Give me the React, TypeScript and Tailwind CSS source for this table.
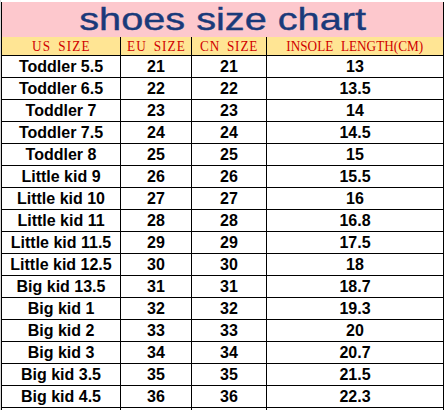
import React from "react";

const rows: [string, string, string, string][] = [
  ["Toddler 5.5", "21", "21", "13"],
  ["Toddler 6.5", "22", "22", "13.5"],
  ["Toddler 7", "23", "23", "14"],
  ["Toddler 7.5", "24", "24", "14.5"],
  ["Toddler 8", "25", "25", "15"],
  ["Little kid 9", "26", "26", "15.5"],
  ["Little kid 10", "27", "27", "16"],
  ["Little kid 11", "28", "28", "16.8"],
  ["Little kid 11.5", "29", "29", "17.5"],
  ["Little kid 12.5", "30", "30", "18"],
  ["Big kid 13.5", "31", "31", "18.7"],
  ["Big kid 1", "32", "32", "19.3"],
  ["Big kid 2", "33", "33", "20"],
  ["Big kid 3", "34", "34", "20.7"],
  ["Big kid 3.5", "35", "35", "21.5"],
  ["Big kid 4.5", "36", "36", "22.3"],
  ["", "", "", ""],
];

const headers = ["US SIZE", "EU SIZE", "CN SIZE", "INSOLE LENGTH(CM)"];
const widths = ["w-[119px]", "w-[71px]", "w-[75px]", "w-[177px]"];
const tracks = [
  "tracking-[1.3px] [word-spacing:3px]",
  "tracking-[1.2px] [word-spacing:3px]",
  "tracking-[1px] [word-spacing:3px]",
  "tracking-[0px] [word-spacing:5px]",
];

export default function App() {
  return (
    <div className="w-[446px] h-[410px] overflow-hidden bg-white border-l border-[#d9d9d9]">
      <div className="mt-[2px] w-[443px]">
        <div className="h-[35px] bg-[#fdc8cd] border-l border-r border-black flex items-center justify-center overflow-hidden">
          <span
            className="inline-block text-[32px] leading-none text-[#1a3a7a] [transform:scaleX(1.24)] pb-[1px] [-webkit-text-stroke:0.4px_#1a3a7a]"
            style={{ fontFamily: '"Liberation Sans", Arial, sans-serif' }}
          >
            shoes size chart
          </span>
        </div>
        <div className="flex h-[19px] bg-[#ffe594] border-l border-b border-black">
          {headers.map((h, i) => (
            <div
              key={i}
              className={`${widths[i]} border-r border-black flex items-center justify-center overflow-hidden`}
            >
              <span
                className={`${tracks[i]} inline-block text-[15px] leading-none text-[#d00000] whitespace-nowrap [transform:scaleX(0.88)]`}
                style={{ fontFamily: '"Liberation Serif", "Times New Roman", serif' }}
              >
                {h}
              </span>
            </div>
          ))}
        </div>
        {rows.map((r, ri) => (
          <div key={ri} className="flex h-[22px] border-l border-b border-black bg-white">
            {r.map((c, ci) => (
              <div
                key={ci}
                className={`${widths[ci]} border-r border-black flex items-center justify-center text-[16px] font-bold leading-none text-black`}
                style={{ fontFamily: '"Liberation Sans", Arial, sans-serif' }}
              >
                {c}
              </div>
            ))}
          </div>
        ))}
      </div>
    </div>
  );
}
